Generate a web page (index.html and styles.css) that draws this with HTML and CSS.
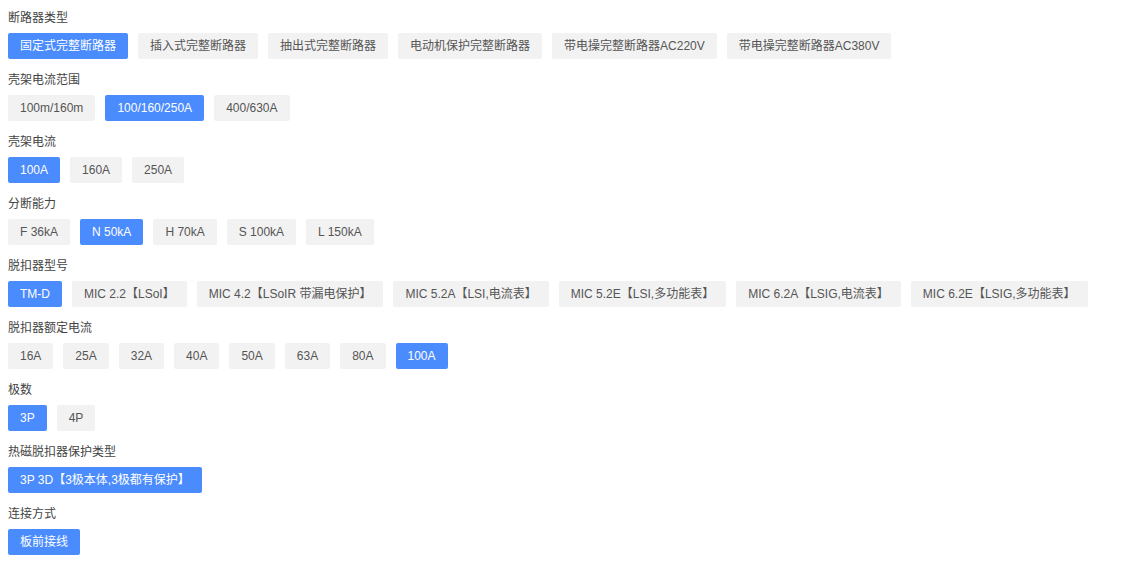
FILE: index.html
```html
<!DOCTYPE html>
<html lang="zh-CN">
<head>
<meta charset="utf-8">
<title>断路器选型</title>
<link rel="stylesheet" href="styles.css">
</head>
<body>
<div class="page">
  <div class="group">
    <div class="label">断路器类型</div>
    <div class="opts">
      <span class="opt active">固定式完整断路器</span>
      <span class="opt">插入式完整断路器</span>
      <span class="opt">抽出式完整断路器</span>
      <span class="opt">电动机保护完整断路器</span>
      <span class="opt">带电操完整断路器AC220V</span>
      <span class="opt">带电操完整断路器AC380V</span>
    </div>
  </div>
  <div class="group">
    <div class="label">壳架电流范围</div>
    <div class="opts">
      <span class="opt">100m/160m</span>
      <span class="opt active">100/160/250A</span>
      <span class="opt">400/630A</span>
    </div>
  </div>
  <div class="group">
    <div class="label">壳架电流</div>
    <div class="opts">
      <span class="opt active">100A</span>
      <span class="opt">160A</span>
      <span class="opt">250A</span>
    </div>
  </div>
  <div class="group">
    <div class="label">分断能力</div>
    <div class="opts">
      <span class="opt">F 36kA</span>
      <span class="opt active">N 50kA</span>
      <span class="opt">H 70kA</span>
      <span class="opt">S 100kA</span>
      <span class="opt">L 150kA</span>
    </div>
  </div>
  <div class="group">
    <div class="label">脱扣器型号</div>
    <div class="opts">
      <span class="opt active">TM-D</span>
      <span class="opt">MIC 2.2【LSoI】</span>
      <span class="opt">MIC 4.2【LSoIR 带漏电保护】</span>
      <span class="opt">MIC 5.2A【LSI,电流表】</span>
      <span class="opt">MIC 5.2E【LSI,多功能表】</span>
      <span class="opt">MIC 6.2A【LSIG,电流表】</span>
      <span class="opt">MIC 6.2E【LSIG,多功能表】</span>
    </div>
  </div>
  <div class="group">
    <div class="label">脱扣器额定电流</div>
    <div class="opts">
      <span class="opt">16A</span>
      <span class="opt">25A</span>
      <span class="opt">32A</span>
      <span class="opt">40A</span>
      <span class="opt">50A</span>
      <span class="opt">63A</span>
      <span class="opt">80A</span>
      <span class="opt active">100A</span>
    </div>
  </div>
  <div class="group">
    <div class="label">极数</div>
    <div class="opts">
      <span class="opt active">3P</span>
      <span class="opt">4P</span>
    </div>
  </div>
  <div class="group">
    <div class="label">热磁脱扣器保护类型</div>
    <div class="opts">
      <span class="opt active">3P 3D【3极本体,3极都有保护】</span>
    </div>
  </div>
  <div class="group">
    <div class="label">连接方式</div>
    <div class="opts">
      <span class="opt active">板前接线</span>
    </div>
  </div>
</div>
</body>
</html>
```

FILE: styles.css
```css
html, body {
  margin: 0;
  padding: 0;
  background: #ffffff;
}

body {
  font-family: "Liberation Sans", Arial, "Noto Sans CJK SC", sans-serif;
  font-size: 12px;
  color: #444444;
}

.page {
  padding: 8px 8px 0 8px;
}

.group {
  margin-bottom: 11px;
}

.label {
  line-height: 20px;
  height: 20px;
  color: #444444;
}

.opts {
  display: flex;
  flex-wrap: wrap;
  gap: 10px;
  margin-top: 5px;
}

.opt {
  display: inline-block;
  height: 26px;
  line-height: 26px;
  padding: 0 12px;
  background: #f2f2f2;
  color: #555555;
  border-radius: 2px;
  white-space: nowrap;
}

.opt.active {
  background: #4a8bfd;
  color: #ffffff;
}
```
